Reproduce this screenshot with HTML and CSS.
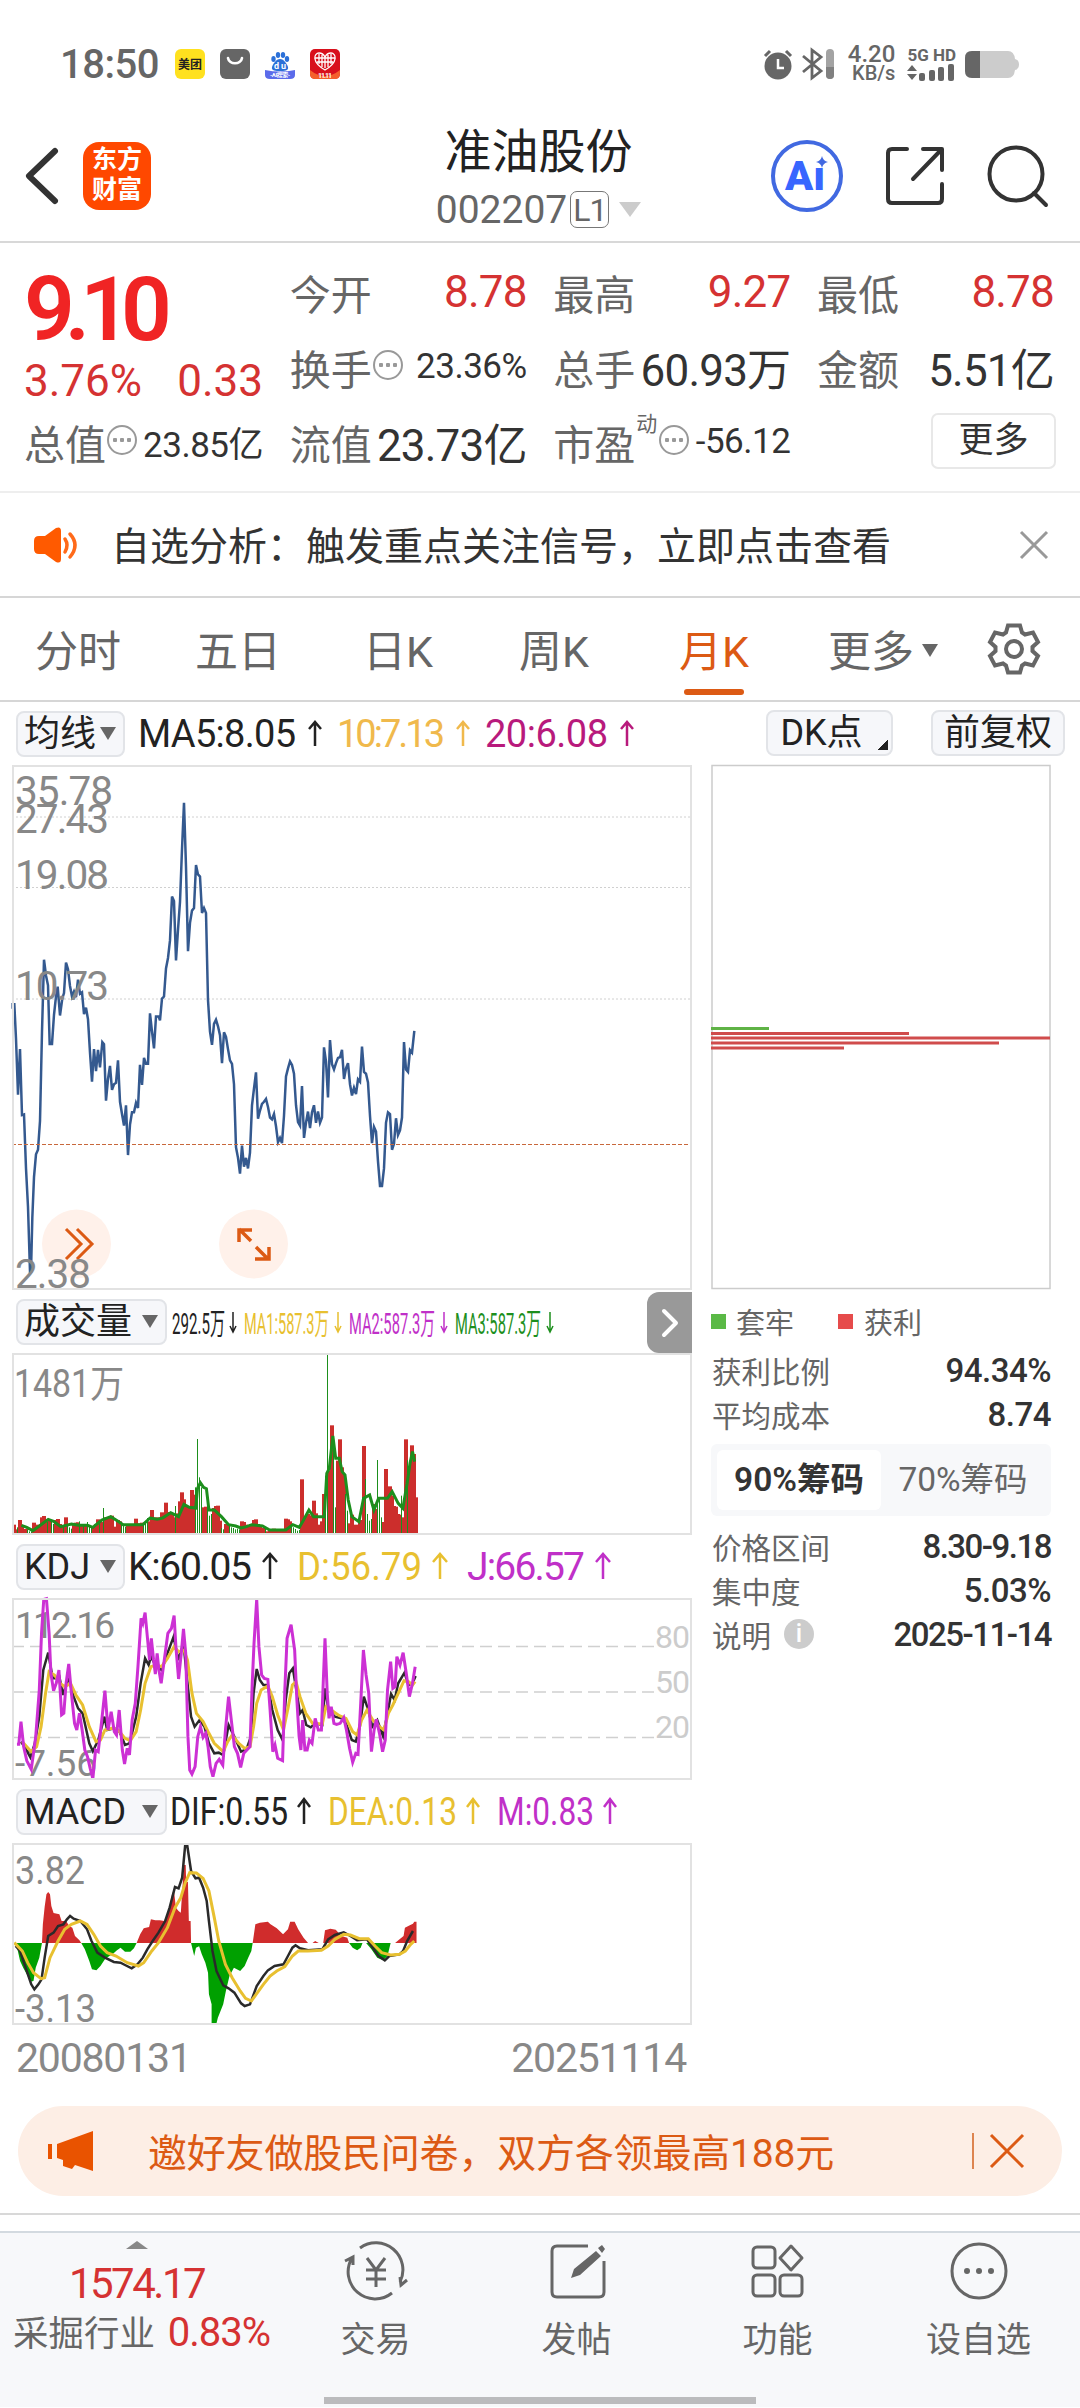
FILE: index.html
```html
<!DOCTYPE html>
<html lang="zh-CN">
<head>
    <title>准油股份 002207</title>
    <meta charset="UTF-8">
    <link rel="stylesheet" href="styles.css">
</head>
<body>
    <div class="status-bar">
        <span class="time">18:50</span>
        <svg class="app" viewBox="0 0 30 30"><rect width="30" height="30" rx="6" fill="#ffe11f"/><text x="3" y="19.5" font-size="12" font-weight="700" textLength="24" fill="#222">美团</text></svg>
        <svg class="app" viewBox="0 0 30 30"><rect width="30" height="30" rx="6" fill="#666"/><path d="M8 9c1 7 13 7 14 0" fill="none" stroke="#fff" stroke-width="2.6" stroke-linecap="round"/></svg>
        <svg class="app" viewBox="0 0 30 30"><g fill="#2b70d8"><ellipse cx="8.500" cy="10" rx="2.200" ry="2.900"/><ellipse cx="13" cy="6" rx="2.200" ry="3"/><ellipse cx="18" cy="6" rx="2.200" ry="3"/><ellipse cx="22" cy="10" rx="2.200" ry="2.900"/><path d="M15 10c4 0 7 5 8 8 1 4-4 4-8 4s-9 0-8-4c1-3 4-8 8-8z"/></g><text x="9" y="19.500" font-size="9" font-weight="700" textLength="12" fill="#fff">du</text><path d="M0 21q15 3 30 0v5q0 4-5 4H5q-5 0-5-4z" fill="#5b6bea"/><text x="5" y="28" font-size="6" font-weight="700" textLength="20" fill="#fff">-AI搜索-</text></svg>
        <svg class="app" viewBox="0 0 30 30"><rect width="30" height="30" rx="5" fill="#d8101c"/><path d="M0 21q15 12 30 0v4q0 5-5 5H5q-5 0-5-5z" fill="#f4602c"/><path d="M15 21C1 13 4 4 9 4c4 0 6 4 6 4s2-4 6-4c5 0 8 9-6 17zM9 5v10M21 5v10M5 9h20M7 13h16M12 6v12M18 6v12M15 9v10" fill="none" stroke="#fff" stroke-width="1.300"/><text x="8" y="29" font-size="7" font-weight="700" textLength="14" fill="#fff">11.11</text></svg>
        <div class="status-right">
            <svg width="30" height="32" viewBox="0 0 30 32"><circle cx="15" cy="18" r="13.500" fill="#666"/><path d="M2 8l5-5M28 8l-5-5" stroke="#666" stroke-width="3"/><path d="M15 11v9h6" fill="none" stroke="#fff" stroke-width="2.500"/></svg>
            <svg width="34" height="32" viewBox="0 0 34 32"><path d="M2 8l18 15-9 7V2l9 7L2 24" fill="none" stroke="#666" stroke-width="2.800"/><rect x="25" y="1" width="8" height="30" rx="4" fill="#a3a3a3"/><path d="M25 19h8v8a4 4 0 0 1-8 0z" fill="#808080"/></svg>
            <div class="speed"><b>4.20</b><span>KB/s</span></div>
            <div class="signal">
                <b>5G HD</b>
                <svg width="48" height="17" viewBox="0 0 48 17" fill="#666"><path d="M0 7l5-6 5 6zM0 10h10l-5 6z"/><rect x="12" y="9" width="6" height="8" rx="2"/><rect x="22" y="6" width="6" height="11" rx="2"/><rect x="31" y="3" width="6" height="14" rx="2"/><rect x="41" y="0" width="6" height="17" rx="2"/></svg>
            </div>
            <svg width="55" height="27" viewBox="0 0 55 27"><path d="M7 0h36q6 0 7 8 4 1 4 5.500t-4 5.500q-1 8-7 8H7q-7 0-7-7V7q0-7 7-7z" fill="#ccc"/><path d="M15 0H7Q0 0 0 7v13q0 7 7 7h8z" fill="#666"/></svg>
        </div>
    </div>

    <div class="header">
        <svg class="back" viewBox="0 0 34 56"><path d="M30 3L4 28l26 25" fill="none" stroke="#333" stroke-width="6" stroke-linecap="round" stroke-linejoin="round"/></svg>
        <div class="logo">东方<br>财富</div>
        <div class="title">
            <h1>准油股份</h1>
            <p>002207<span class="level">L1</span><i class="tri"></i></p>
        </div>
        <div class="actions">
            <svg width="72" height="74" viewBox="0 0 72 74"><circle cx="36" cy="37" r="34" fill="none" stroke="#4169e1" stroke-width="4"/><text x="14" y="51" font-size="41" font-weight="900" textLength="40" lengthAdjust="spacingAndGlyphs" fill="#3866ff">Aı</text><path d="M51 17q1 5 6 6-5 1-6 6-1-5-6-6 5-1 6-6z" fill="#4169e1"/></svg>
            <svg width="60" height="60" viewBox="0 0 60 60"><path d="M22 3H7Q3 3 3 7v46q0 4 4 4h46q4 0 4-4V38M38 3h19v21M56 4L28 33" fill="none" stroke="#333" stroke-width="4" stroke-linecap="round" stroke-linejoin="round"/></svg>
            <svg width="62" height="62" viewBox="0 0 62 62"><circle cx="29" cy="29" r="26.500" fill="none" stroke="#333" stroke-width="4"/><path d="M47 48l12 12" stroke="#333" stroke-width="4" stroke-linecap="round"/></svg>
        </div>
    </div>

    <div class="quote">
        <div class="col">
            <div class="price">9.10</div>
            <div class="cell change"><b class="red">3.76%</b><b class="red">0.33</b></div>
            <div class="cell">总值<i class="more-dot"></i><b class="small">23.85亿</b></div>
        </div>
        <div class="col">
            <div class="cell">今开<b class="red">8.78</b></div>
            <div class="cell">换手<i class="more-dot"></i><b class="small">23.36%</b></div>
            <div class="cell">流值<b>23.73亿</b></div>
        </div>
        <div class="col">
            <div class="cell">最高<b class="red">9.27</b></div>
            <div class="cell">总手<b>60.93万</b></div>
            <div class="cell">市盈<sup>动</sup><i class="more-dot"></i><b class="small">-56.12</b></div>
        </div>
        <div class="col">
            <div class="cell">最低<b class="red">8.78</b></div>
            <div class="cell">金额<b>5.51亿</b></div>
            <div class="cell"><button class="more">更多</button></div>
        </div>
    </div>

    <div class="notice">
        <svg width="44" height="36" viewBox="0 0 44 36"><path d="M0 14q0-5 5-5h6L22 1q5-2 5 3v28q0 5-5 3l-11-8H5q-5 0-5-5z" fill="#ff5a00"/><path d="M31 12q4 6 0 13M36 7q10 11 0 23" fill="none" stroke="#ff6a1a" stroke-width="3.500" stroke-linecap="round"/></svg>
        <span>自选分析：触发重点关注信号，立即点击查看</span>
        <svg width="30" height="30" viewBox="0 0 30 30"><path d="M2 2l26 26M28 2L2 28" stroke="#999" stroke-width="3"/></svg>
    </div>

    <div class="tabs">
        <span>分时</span><span>五日</span><span>日K</span><span>周K</span><span class="active">月K</span><span class="tab-more">更多<i class="tri"></i></span>
        <svg width="52" height="52" viewBox="-26 -26 52 52" fill="none" stroke="#666" stroke-width="4"><path d="M-6-23.500H6L8-16.500L11-14.500L19-16.500L24-7L18.500-2V2L24 7L19 16.500L11 14.500L8 16.500L6 23.500H-6L-8 16.500L-11 14.500L-19 16.500L-24 7L-18.500 2V-2L-24-7L-19-16.500L-11-14.500L-8-16.500Z"/><circle r="8"/></svg>
    </div>

    <div class="main">
        <div class="charts">
            <div class="indicator">
                <button class="pick narrow">均线<i class="tri"></i></button>
                <svg class="legend" width="500" height="62" viewBox="130 0 500 62" font-size="38">
                    <text x="138" y="45" textLength="158">MA5:8.05</text><path d="M315 44V20M309 27l6-7 6 7"/>
                    <g class="gold"><text x="337" y="45" textLength="108">10:7.13</text><path d="M463 44V20M457 27l6-7 6 7"/></g>
                    <g class="plum"><text x="485" y="45" textLength="123">20:6.08</text><path d="M627 44V20M621 27l6-7 6 7"/></g>
                </svg>
            </div>
            <div class="plot tall">
                <svg width="680" height="525" viewBox="12 764 680 525">
                    <path d="M12 816H692M12 886.500H692M12 998H692" stroke="#d0d0d0" stroke-dasharray="2 2"/>
                    <g transform="translate(0 750) scale(.33333 .35075)">
                        <polyline class="line price-line" points="38,735 38,722 43,722 48,820 54,980 60,850 66,1038 72,1036 78,1190 84,1300 90,1485 93,1485 97,1330 102,1215 108,1150 114,1137 120,1055 126,800 132,595 138,640 144,668 149,835 156,835 162,752 168,700 173,672 180,754 187,705 192,690 198,603 204,622 210,670 216,700 222,686 228,702 234,652 240,692 246,688 252,750 258,732 264,765 270,860 276,943 282,850 288,913 294,852 300,902 307,830 312,836 318,997 324,935 330,898 336,966 342,950 348,946 354,882 360,1000 366,1035 372,1068 378,1010 384,1152 390,1065 396,1030 402,1030 408,1003 414,1018 420,895 426,952 432,875 438,892 444,892 450,748 456,800 462,848 468,757 476,757 480,768 486,706 492,700 498,620 504,590 510,540 516,415 522,428 528,597 534,510 540,430 546,280 552,148 558,330 564,571 570,490 576,455 582,448 588,325 594,352 600,358 606,462 612,448 618,462 624,710 630,800 636,838 642,778 648,766 654,785 660,810 666,890 672,802 678,815 684,850 690,882 696,892 702,950 708,1130 714,1160 720,1205 726,1125 732,1185 738,1160 744,1190 750,1145 756,1010 762,962 768,916 774,1048 780,1025 786,1006 792,1000 798,992 804,1015 810,1045 816,1050 822,1035 828,1070 834,1115 840,1103 846,1118 852,1040 858,928 864,905 870,885 876,895 882,920 888,1010 894,1058 900,1068 906,955 912,1103 918,1060 924,1028 930,1075 936,1030 942,1010 948,1060 954,1028 960,1060 966,1045 972,845 978,885 984,988 990,824 996,893 1002,908 1008,890 1014,875 1020,873 1026,852 1032,935 1038,905 1044,890 1050,950 1056,982 1062,960 1068,978 1074,936 1080,943 1086,843 1092,915 1098,920 1104,945 1110,1040 1116,1118 1122,1072 1128,1085 1134,1170 1140,1240 1146,1240 1152,1190 1158,1060 1164,1030 1170,1035 1176,1137 1182,1120 1188,1047 1194,1095 1200,1082 1206,1045 1212,830 1218,908 1224,915 1230,853 1236,860 1243,798"/>
                    </g>
                    <path d="M12 1143.500H692" stroke="#c8683c" stroke-dasharray="4 2"/>
                    <g fill="#fff1ea"><circle cx="76.500" cy="1243" r="34.500"/><circle cx="253.500" cy="1243" r="34.500"/></g>
                    <g fill="none" stroke="#dc5a14" stroke-width="3"><path d="M66 1228l15 15-15 15M77 1228l15 15-15 15"/><path stroke-width="3.500" d="M251 1240l-12-12M239 1241V1229H252M256 1246l12 12M269 1246v12H255"/></g>
                    <g class="axis" font-size="40.500">
                        <text x="15" y="804" textLength="98">35.78</text><text x="15" y="832" textLength="94">27.43</text><text x="15" y="888" textLength="94">19.08</text><text x="15" y="999" textLength="94">10.73</text><text x="15" y="1287" textLength="76">2.38</text>
                    </g>
                </svg>
            </div>

            <div class="indicator">
                <button class="pick">成交量<i class="tri"></i></button>
                <svg class="legend thin" width="400" height="64" viewBox="170 1289 400 64" font-size="30">
                    <text x="172" y="1333" textLength="53" lengthAdjust="spacingAndGlyphs">292.5万</text><path d="M233 1311v20M230 1325l3 6 3-6"/>
                    <g class="yellow"><text x="244" y="1333" textLength="85" lengthAdjust="spacingAndGlyphs">MA1:587.3万</text><path d="M338 1311v20M335 1325l3 6 3-6"/></g>
                    <g class="purple"><text x="349" y="1333" textLength="86" lengthAdjust="spacingAndGlyphs">MA2:587.3万</text><path d="M444 1311v20M441 1325l3 6 3-6"/></g>
                    <g class="green"><text x="455" y="1333" textLength="86" lengthAdjust="spacingAndGlyphs">MA3:587.3万</text><path d="M550 1311v20M547 1325l3 6 3-6"/></g>
                </svg>
                <div class="handle"><svg width="18" height="30" viewBox="0 0 18 30"><path d="M3 3l12 12L3 27" fill="none" stroke="#fff" stroke-width="4" stroke-linecap="round" stroke-linejoin="round"/></svg></div>
            </div>
            <div class="plot">
                <svg width="680" height="182" viewBox="12 1353 680 182">
                    <text class="axis" x="14" y="1397" font-size="38" textLength="110" lengthAdjust="spacingAndGlyphs">1481万</text>
                    <g id="volume"></g>
                    <g transform="translate(0 1290) scale(.35714 .33333)">
                        <polyline class="line vol-line" points="60,706 75,712 92,722 115,704 135,688 150,694 170,710 200,702 220,706 245,706 260,712 285,690 310,680 325,690 345,704 370,704 400,704 420,684 440,688 455,684 478,668 500,680 515,643 530,652 548,654 553,595 561,578 570,592 578,596 585,660 600,660 620,680 640,704 660,708 675,714 690,710 705,704 735,708 755,720 800,720 820,704 838,712 850,690 865,660 878,680 895,680 908,680 915,550 922,535 932,438 940,505 950,505 958,545 966,555 975,630 985,680 1005,695 1018,625 1035,615 1047,660 1060,625 1085,625 1098,605 1115,640 1128,655 1140,580 1148,520 1155,485 1161,515"/>
                    </g>
                </svg>
            </div>

            <div class="indicator">
                <button class="pick narrow">KDJ<i class="tri"></i></button>
                <svg class="legend" width="500" height="63" viewBox="125 1535 500 63" font-size="39">
                    <text x="128" y="1580" textLength="124">K:60.05</text><path d="M270 1579v-25M263 1562l7-8 7 8"/>
                    <g class="yellow"><text x="297" y="1580" textLength="125" lengthAdjust="spacingAndGlyphs">D:56.79</text><path d="M440 1579v-25M433 1562l7-8 7 8"/></g>
                    <g class="purple"><text x="467" y="1580" textLength="118">J:66.57</text><path d="M603 1579v-25M596 1562l7-8 7 8"/></g>
                </svg>
            </div>
            <div class="plot">
                <svg width="680" height="182" viewBox="12 1598 680 182">
                    <path d="M12 1646.500H655M12 1692H655M12 1737.500H655" stroke="#d0d0d0" stroke-width="1.500" stroke-dasharray="12 6"/>
                    <g fill="#ccc" font-size="32"><text x="655" y="1648" textLength="35">80</text><text x="655" y="1693" textLength="35">50</text><text x="655" y="1738" textLength="35">20</text></g>
                    <g class="axis" font-size="37"><text x="15" y="1638" textLength="100">112.16</text><text x="15" y="1776" textLength="82">-7.56</text></g>
                    <g transform="translate(0 1550) scale(.44643 .33333)">
                        <polyline class="line dif" points="47,575 55,590 68,622 78,580 88,500 97,360 108,308 118,385 128,385 133,380 141,435 153,382 165,440 175,475 185,490 200,580 208,604 220,570 234,500 240,540 256,535 268,545 280,585 290,580 305,500 315,400 325,325 333,345 338,320 350,350 362,360 375,310 389,260 399,330 411,280 420,400 428,500 436,530 447,510 458,530 468,580 480,610 490,608 500,615 512,525 525,560 540,605 552,598 562,560 568,430 575,357 582,390 590,405 600,405 610,480 622,540 633,570 640,450 648,370 656,355 665,430 672,490 678,480 686,525 696,532 706,520 722,525 728,415 736,480 750,500 765,505 775,520 788,570 797,575 806,530 815,440 825,480 834,530 845,510 858,558 868,490 876,432 884,450 892,400 906,368 915,405 924,400 931,378"/>
                        <polyline class="line dea" points="50,575 70,605 82,590 92,530 102,430 110,365 122,375 135,400 145,410 158,400 170,435 185,465 200,530 215,575 225,570 235,540 250,535 265,540 280,565 292,572 305,545 315,480 325,400 338,350 350,345 362,350 375,325 390,290 400,305 412,300 420,330 430,430 440,490 455,515 468,550 480,580 500,605 510,575 520,555 535,580 548,595 560,590 568,530 575,460 585,420 600,408 610,440 622,495 635,540 645,475 655,405 663,395 672,440 685,490 700,520 722,522 730,470 742,480 760,497 775,505 790,545 800,555 810,510 822,480 835,510 850,530 860,540 870,490 880,465 892,430 905,392 915,395 924,405 930,395"/>
                        <polyline class="line j-line" points="38,583 42,583 47,515 53,590 60,632 70,658 76,600 80,560 88,420 93,250 98,148 104,146 110,250 114,370 120,422 126,400 132,360 138,495 143,490 148,400 154,342 160,430 167,520 172,540 178,490 184,540 190,600 196,620 202,655 208,686 214,600 220,605 228,510 235,422 242,540 249,485 256,545 261,555 267,480 274,600 279,642 285,595 290,615 296,510 303,460 309,350 316,205 320,220 325,188 330,260 335,330 339,265 344,330 348,372 352,310 356,360 361,400 368,330 376,250 384,235 390,197 394,290 400,387 406,310 411,237 416,310 421,560 425,660 430,672 437,650 443,560 449,530 455,562 461,550 466,590 471,650 477,680 484,640 491,628 499,645 505,540 512,440 519,520 525,590 532,610 539,652 546,610 553,600 560,590 565,400 569,280 575,148 580,290 586,375 592,385 600,388 605,480 611,605 616,585 622,625 633,632 638,420 643,265 652,224 660,300 665,450 670,560 674,600 678,510 683,600 688,600 693,570 699,580 706,505 713,540 720,540 724,400 728,265 733,430 737,505 742,470 748,520 754,523 762,520 770,503 776,540 783,595 790,637 797,610 802,613 808,460 814,300 820,375 826,430 832,605 838,540 843,508 850,550 857,605 863,570 868,420 875,335 880,415 885,410 889,320 896,345 903,308 910,370 917,440 924,400 930,350"/>
                    </g>
                </svg>
            </div>

            <div class="indicator">
                <button class="pick">MACD<i class="tri"></i></button>
                <svg class="legend" width="460" height="62" viewBox="170 1780 460 62" font-size="39">
                    <text x="170" y="1825" textLength="118" lengthAdjust="spacingAndGlyphs">DIF:0.55</text><path d="M304 1824v-25M298 1807l6-8 6 8"/>
                    <g class="yellow"><text x="328" y="1825" textLength="129" lengthAdjust="spacingAndGlyphs">DEA:0.13</text><path d="M473 1824v-25M467 1807l6-8 6 8"/></g>
                    <g class="purple"><text x="497" y="1825" textLength="97" lengthAdjust="spacingAndGlyphs">M:0.83</text><path d="M610 1824v-25M604 1807l6-8 6 8"/></g>
                </svg>
            </div>
            <div class="plot">
                <svg width="680" height="182" viewBox="12 1842 680 182">
                    <g class="axis" font-size="39"><text x="15" y="1883" textLength="70" lengthAdjust="spacingAndGlyphs">3.82</text><text x="15" y="2021" textLength="81" lengthAdjust="spacingAndGlyphs">-3.13</text></g>
                    <g transform="translate(0 1790) scale(.44643 .33333)">
                        <path fill="#00a000" d="M35 456L40 480L45 510L52 530L60 550L68 572L75 570L80 530L88 500L94 456ZM182 456L190 475L200 510L206 535L216 538L225 525L235 505L245 495L252 490L262 478L270 470L280 482L292 482L300 472L306 456ZM428 456L435 495L439 470L446 466L452 490L460 515L466 545L468 610L474 640V702H484L488 680L500 640L506 600L514 555L524 530L538 540L548 525L556 500L563 480L566 456ZM782 456L790 470L800 478L808 470L812 456ZM820 456L832 475L845 500L858 508L868 495L875 456Z"/>
                        <path fill="#d02c2c" d="M94 456L96 400L100 348L104 310L108 303L112 310L115 345L120 366L133 370L138 390H148L155 405L162 410L168 435L178 448L182 456ZM306 456L314 430L322 412L334 408L338 385L348 388H358L368 390L374 370L380 345L386 305L390 303L394 350L400 360L405 365L408 305L412 222H416L417 273H421L423 390H427L428 456ZM566 456L572 400L582 395L600 392L606 400L620 412L634 430L645 415L650 392H660L668 415L680 440L690 456ZM700 456L706 450L714 456ZM724 456L728 418L740 413L752 416L765 435L778 440L782 456ZM885 456L895 445L904 435L907 410L918 403L925 398L928 392H933V456Z"/>
                        <polyline class="line dif" points="35,465 45,480 60,540 70,580 77,595 86,580 93,565 100,500 108,435 120,425 130,405 142,400 150,385 157,375 165,383 180,390 195,415 205,450 218,485 235,500 255,513 270,515 280,522 295,532 308,520 320,500 330,475 342,450 355,425 370,390 380,350 392,288 400,292 408,260 415,160 419,160 428,240 438,262 446,260 455,290 463,330 468,390 476,480 485,540 500,583 512,592 525,605 540,637 548,645 560,640 575,585 590,555 600,538 615,525 635,520 645,495 655,470 662,463 672,472 690,478 722,475 735,445 750,432 770,424 785,435 800,448 822,445 835,470 848,495 862,508 872,495 895,490 903,480 912,450 925,420"/>
                        <polyline class="line dea" points="32,455 50,480 62,515 75,545 92,563 100,560 112,500 130,450 145,415 160,400 180,390 195,400 210,430 225,465 240,485 260,495 285,515 310,525 322,515 340,480 355,455 375,410 392,350 405,320 415,275 425,245 440,246 455,262 468,300 480,380 490,450 505,520 520,560 538,600 550,622 563,630 575,608 590,580 605,555 620,540 638,527 655,495 668,480 690,480 720,478 735,465 750,445 770,430 785,432 805,443 825,443 840,465 855,485 875,492 895,490 908,480 920,460 928,450"/>
                    </g>
                </svg>
            </div>
            <div class="dates"><span>20080131</span><span>20251114</span></div>
        </div>

        <div class="side">
            <div class="side-buttons">
                <button class="pick dk">DK点</button>
                <button class="pick fq">前复权</button>
            </div>
            <svg class="chips" width="340" height="525" viewBox="711 764 340 525"><rect x="712" y="765.500" width="338" height="523" fill="none" stroke="#ccc" stroke-width="1.500"/><path d="M711 1028.500h58" stroke="#5fb346" stroke-width="3"/><path d="M711 1033.500h198M711 1038h339M711 1043h288M711 1048h133" stroke="#d04c4c" stroke-width="3"/></svg>
            <div class="chip-legend"><i class="sq lose"></i>套牢<i class="sq win"></i>获利</div>
            <div class="info-row">获利比例<b>94.34%</b></div>
            <div class="info-row">平均成本<b>8.74</b></div>
            <div class="segment"><span class="on">90%筹码</span><span>70%筹码</span></div>
            <div class="info-row">价格区间<b class="tight">8.30-9.18</b></div>
            <div class="info-row">集中度<b>5.03%</b></div>
            <div class="info-row">说明<i class="info">i</i><b class="tight">2025-11-14</b></div>
        </div>
    </div>

    <div class="banner">
        <svg width="46" height="40" viewBox="0 0 46 40"><path d="M0 13h4v15H0zM9 13L45 0v40L27 34l-3 4-9-3v-6l-6-2z" fill="#e95300"/></svg>
        <span>邀好友做股民问卷，双方各领最高188元</span>
        <svg class="banner-close" width="54" height="38" viewBox="0 0 54 38"><path d="M2 1v36" stroke="#d2601e" stroke-width="1.500"/><path d="M20 3l32 32M52 3L20 35" stroke="#dc5a14" stroke-width="3"/></svg>
    </div>

    <div class="bottom-bar">
        <div class="index">
            <i class="tri up"></i>
            <div class="index-value">1574.17</div>
            <div class="index-name">采掘行业 <b>0.83%</b></div>
        </div>
        <div class="nav">
            <svg width="66" height="60" viewBox="0 0 66 60"><path d="M17 7A27 27 0 0 1 57 41M49 52A27 27 0 0 1 9 17M2 20l8-4v8M64 39l-6 5-1-8" /><path d="M24 17l9 12 9-12M33 29v17M23 29h20M23 38h20"/></svg>
            交易
        </div>
        <div class="nav">
            <svg width="60" height="60" viewBox="0 0 60 60"><path d="M41 5H10q-5 0-5 5v41q0 5 5 5h42q5 0 5-5V20"/><path d="M24 37l3-9L49 10l5 5-21 19zM51 7l4-3 3 4-3 4z" fill="#666" stroke="none"/></svg>
            发帖
        </div>
        <div class="nav">
            <svg width="60" height="60" viewBox="0 0 60 60"><rect x="5" y="6" width="22" height="21" rx="4"/><rect x="5" y="34" width="22" height="21" rx="4"/><rect x="32" y="34" width="22" height="21" rx="4"/><path d="M43 5l11 12-11 12-11-12z" stroke-linejoin="round"/></svg>
            功能
        </div>
        <div class="nav">
            <svg width="60" height="60" viewBox="0 0 60 60"><circle cx="30" cy="30" r="27"/><g fill="#666" stroke="none"><circle cx="18" cy="30" r="3"/><circle cx="30" cy="30" r="3"/><circle cx="42" cy="30" r="3"/></g></svg>
            设自选
        </div>
    </div>
    <div class="home-line"></div>

    <script>
        // 成交量柱：正数为红，负数为绿
        const volumes = [
            28,14,-20,42,26,14,15,-12,-8,-8, 34,28,20,28,50,54,40,-36,42,-38,
            -30,42,45,30,24,-26,50,-28,-20,-16, 32,34,35,-38,30,-26,28,-36,-22,-18,
            24,30,44,-40,36,-78,50,48,52,55, 20,22,42,38,-28,-24,-22,24,28,26,
            30,46,32,28,34,-30,-34,-48,38,72, 46,50,42,50,65,54,94,66,60,58,
            50,-84,62,98,125,104,84,14,80,132, 118,-140,-285,-170,-140,80,82,-90,-55,-60,
            78,84,85,40,-18,-14,30,28,-26,-20, -18,-14,-16,-14,38,36,28,26,24,30,
            42,44,30,24,14,18,-16,8,10,12, 16,12,8,10,10,8,46,44,38,-28,
            -20,-15,-10,-12,164,40,50,60,44,56, 100,62,26,28,38,120,-175,-541,190,326,
            -290,-80,220,284,200,170,-120,-70,32,58, 26,28,24,42,40,264,-165,-60,-40,-45,
            90,75,-222,-110,-50,36,195,140,143,115, 84,82,60,58,-115,50,284,-222,200,266,
            240,110
        ];
        let bars = '';
        volumes.forEach((v, i) => {
            const h = Math.abs(v) / 3;
            const x = 13 + i * 2;
            const w = v > 0 ? 4 : 1;
            bars += `<rect x="${v > 0 ? x - 1 : x}" y="${1534 - h}" width="${w}" height="${h}" fill="${v > 0 ? '#cc2e2c' : '#1d8f1d'}"/>`;
        });
        document.getElementById('volume').innerHTML = bars;
    </script>
</body>
</html>
```
FILE: styles.css
```css
* {
    box-sizing: border-box;
}
body {
    margin: 0;
    width: 1080px;
    height: 2408px;
    overflow: hidden;
    background: #fff;
    color: #333;
    font-family: Roboto, "Noto Sans CJK SC", sans-serif;
    display: flex;
    flex-direction: column;
}
svg {
    display: block;
    flex: none;
    overflow: visible;
}
b, h1 {
    font-weight: 400;
}
i {
    font-style: normal;
}
button {
    font-family: inherit;
    padding: 0;
}
.red {
    color: #d53232;
}
.tri {
    display: inline-block;
    border: 8px solid transparent;
    border-top: 13px solid #666;
    border-bottom: 0;
}

/* 状态栏 */
.status-bar {
    height: 110px;
    padding: 18px 60px 0 60px;
    display: flex;
    align-items: center;
    color: #666;
}
.time {
    width: 115px;
    font-size: 40px;
    font-weight: 500;
    letter-spacing: -0.5px;
}
.app {
    width: 30px;
    height: 30px;
    margin-right: 15px;
}
.status-right {
    margin-left: auto;
    display: flex;
    align-items: center;
}
.status-right > svg:nth-child(2) {
    margin-left: 8px;
}
.speed {
    width: 48px;
    margin-left: 12px;
    font-size: 20px;
    line-height: 19px;
    text-align: right;
    font-weight: 500;
}
.speed b {
    display: block;
    font-size: 24px;
    font-weight: 500;
}
.signal {
    margin: 0 9px 0 12px;
}
.signal b {
    display: block;
    font-size: 17px;
    line-height: 17px;
    font-weight: 700;
}

/* 标题栏 */
.header {
    height: 133px;
    padding: 0 31px 0 25px;
    border-bottom: 2px solid #d8d8d8;
    display: flex;
    align-items: center;
}
.back {
    width: 34px;
    height: 56px;
}
.logo {
    width: 68px;
    height: 68px;
    margin-left: 24px;
    border-radius: 16px;
    background: #ff4800;
    color: #fff;
    font-size: 25px;
    font-weight: 700;
    line-height: 30px;
    padding-top: 3px;
    text-align: center;
}
.title {
    flex: 1;
    padding: 8px 0 0 155px;
    text-align: center;
}
.title h1 {
    margin: 0;
    font-size: 47px;
    line-height: 60px;
    color: #222;
}
.title p {
    margin: 0;
    height: 56px;
    font-size: 39px;
    color: #666;
    display: flex;
    align-items: center;
    justify-content: center;
}
.level {
    width: 39px;
    height: 37px;
    margin: 0 10px 0 3px;
    border: 1.5px solid #777;
    border-radius: 7px;
    font-size: 32px;
    line-height: 36px;
    letter-spacing: -1px;
}
.title .tri {
    border-width: 15px 11px 0;
    border-top-color: #ccc;
}
.actions {
    display: flex;
    align-items: center;
    gap: 42px;
}

/* 行情 */
.quote {
    height: 250px;
    padding: 11px 26px 0 24px;
    border-bottom: 2px solid #eee;
    display: flex;
    justify-content: space-between;
}
.col {
    width: 237px;
}
.col:first-child {
    width: 239px;
}
.price {
    height: 89px;
    padding-top: 11px;
    line-height: 89px;
    font-size: 89px;
    font-weight: 600;
    letter-spacing: -10px;
    color: #f02424;
}
.cell {
    height: 75px;
    display: flex;
    align-items: center;
    font-size: 41px;
    color: #666;
}
.cell.change {
    height: 61px;
    padding-top: 14px;
    justify-content: space-between;
}
.cell b {
    margin-left: auto;
    font-size: 44px;
    letter-spacing: -0.8px;
    color: #333;
    white-space: nowrap;
}
.cell.change b {
    margin-left: 0;
    letter-spacing: 0;
}
.cell b.red {
    color: #d53232;
}
.cell b.small {
    font-size: 35px;
    letter-spacing: -0.5px;
}
.cell sup {
    font-size: 21px;
    align-self: flex-start;
    line-height: 20px;
    margin: 10px 1px 0 1px;
}
.more-dot {
    width: 30px;
    height: 30px;
    margin: 0 0 3px 1px;
    border: 2px solid #999;
    border-radius: 50%;
    background: radial-gradient(circle at 6px 13px, #999 2px, transparent 2.5px), radial-gradient(circle at 13px 13px, #999 2px, transparent 2.5px), radial-gradient(circle at 20px 13px, #999 2px, transparent 2.5px);
}
.more {
    width: 125px;
    height: 56px;
    margin: 0 -2px 1px auto;
    border: 2px solid #e8e8e8;
    border-radius: 7px;
    background: #fff;
    font-size: 35px;
    line-height: 50px;
    color: #333;
}

/* 提示 */
.notice {
    height: 105px;
    padding: 0 31px 0 34px;
    border-bottom: 2px solid #d6d6d6;
    display: flex;
    align-items: center;
    font-size: 39px;
}
.notice span {
    flex: 1;
    padding: 0 0 4px 33px;
    white-space: nowrap;
}

/* 周期 */
.tabs {
    height: 104px;
    border-bottom: 2px solid #d6d6d6;
    padding-left: 35px;
    display: grid;
    grid-template-columns: 160px 168px 156px 160px 149px 160px 52px;
    align-items: center;
    font-size: 43px;
    color: #666;
}
.tabs span {
    justify-self: start;
    line-height: 88px;
    padding-top: 5px;
    white-space: nowrap;
}
.tabs .active {
    position: relative;
    color: #dc5a14;
}
.active::after {
    content: "";
    position: absolute;
    left: 5px;
    width: 60px;
    bottom: 1px;
    height: 6px;
    border-radius: 3px;
    background: #dc5a14;
}
.tab-more .tri {
    margin: 0 0 10px 8px;
}

/* 图表 */
.main {
    display: flex;
    height: 1404px;
}
.charts {
    width: 692px;
    padding-left: 12px;
}
.indicator {
    position: relative;
    height: 63px;
    display: flex;
    align-items: center;
}
.pick {
    height: 46px;
    border: 2px solid #e2e4e8;
    border-radius: 8px;
    background: #f6f7fa;
    color: #222;
    font-size: 36px;
    line-height: 40px;
    white-space: nowrap;
}
.indicator .pick {
    width: 151px;
    margin-left: 4px;
    padding: 0 7px 0 6px;
    display: flex;
    align-items: center;
    justify-content: space-between;
}
.indicator .narrow {
    width: 109px;
}
.legend {
    position: absolute;
    left: 118px;
    top: 0;
    fill: #222;
    stroke: none;
}
.legend path {
    fill: none;
    stroke: #222;
    stroke-width: 2.5;
}
.legend.thin path {
    stroke-width: 1.5;
}
.indicator .pick:not(.narrow) + .legend {
    left: 158px;
}
.indicator .narrow + .legend[font-size="39"] {
    left: 113px;
}
.legend .gold { fill: #f0b94c; }
.legend .gold path { stroke: #f0b94c; }
.legend .plum { fill: #b81a7c; }
.legend .plum path { stroke: #b81a7c; }
.legend .yellow { fill: #e8c030; }
.legend .yellow path { stroke: #e8c030; }
.legend .purple { fill: #c030c8; }
.legend .purple path { stroke: #c030c8; }
.legend .green { fill: #1d8f1d; }
.legend .green path { stroke: #1d8f1d; }
.plot {
    height: 182px;
    outline: 2px solid #e2e2e2;
    outline-offset: -2px;
}
.plot.tall {
    height: 525px;
}
.axis {
    fill: #888;
}
.line {
    fill: none;
    stroke-width: 2.5;
    vector-effect: non-scaling-stroke;
}
.price-line { stroke: #34598f; }
.vol-line { stroke: #1d8f1d; stroke-width: 3; }
.dif { stroke: #2a2a2a; }
.dea { stroke: #e8c030; stroke-width: 3; }
.j-line { stroke: #cc30d4; stroke-width: 3; }
.handle {
    position: absolute;
    right: 0;
    top: 2px;
    width: 45px;
    height: 61px;
    border-radius: 12px 0 0 12px;
    background: #999;
    display: flex;
    align-items: center;
    justify-content: center;
}
.dates {
    display: flex;
    justify-content: space-between;
    padding: 9px 6px 0 4px;
    font-size: 41px;
    line-height: 48px;
    letter-spacing: -1.2px;
    color: #888;
}

/* 筹码 */
.side {
    width: 340px;
    margin-left: 19px;
}
.side-buttons {
    height: 62px;
    display: flex;
    align-items: center;
    padding-left: 55px;
}
.side-buttons .pick {
    flex: none;
}
.dk {
    width: 127px;
    margin-right: 38px;
    padding-right: 16px;
    background: linear-gradient(135deg, transparent 50%, #222 50%) 109px 27px / 11px 11px no-repeat #f6f7fa;
}
.fq {
    width: 134px;
}
.chip-legend {
    height: 64px;
    display: flex;
    align-items: center;
    font-size: 29px;
    color: #666;
}
.sq {
    width: 15px;
    height: 15px;
    margin-right: 10px;
}
.lose {
    background: #5ab946;
}
.win {
    background: #e64b4b;
    margin-left: 44px;
    margin-right: 11px;
}
.info-row {
    height: 44px;
    padding-left: 1px;
    display: flex;
    align-items: center;
    font-size: 29.5px;
    color: #666;
}
.info-row:nth-child(4) {
    margin-top: -5px;
}
.info-row b {
    margin-left: auto;
    font-size: 33px;
    font-weight: 500;
    letter-spacing: -0.5px;
    color: #333;
}
.info-row .tight {
    letter-spacing: -1.5px;
}
.info {
    width: 30px;
    height: 30px;
    margin-left: 13px;
    border-radius: 50%;
    background: #ccc;
    color: #fff;
    font-size: 25px;
    line-height: 30px;
    text-align: center;
    font-weight: 500;
}
.segment {
    height: 72px;
    margin: 8px 0;
    padding: 6px;
    border-radius: 6px;
    background: #f7f8fa;
    display: flex;
    font-size: 33.5px;
    line-height: 60px;
    color: #666;
    text-align: center;
}
.segment span {
    width: 164px;
}
.segment .on {
    border-radius: 6px;
    background: #fff;
    color: #333;
    font-weight: 600;
}

/* 横幅 */
.banner {
    height: 90px;
    margin: 0 18px 17px;
    padding: 0 37px 0 30px;
    border-radius: 45px;
    background: #fdeee5;
    color: #dc5a14;
    font-size: 39px;
    display: flex;
    align-items: center;
}
.banner span {
    padding: 0 0 3px 54px;
    letter-spacing: -0.2px;
    white-space: nowrap;
}
.banner-close {
    margin-left: auto;
}

/* 底部 */
.bottom-bar {
    position: relative;
    height: 164px;
    margin-top: 18px;
    border-top: 2px solid #d3dae0;
    background: #f7f8fa;
    display: flex;
}
.bottom-bar::before {
    content: "";
    position: absolute;
    left: 0;
    top: -20px;
    width: 100%;
    height: 2px;
    background: #d8d8d8;
}
.index {
    width: 275px;
    padding-right: 2px;
    display: flex;
    flex-direction: column;
    align-items: center;
}
.up {
    margin-top: 8px;
    border: 11px solid transparent;
    border-top: 0;
    border-bottom: 8px solid #888;
}
.index-value {
    margin-top: 11px;
    font-size: 42px;
    line-height: 48px;
    letter-spacing: -2.5px;
    color: #d53232;
}
.index-name {
    padding-left: 10px;
    font-size: 35.5px;
    line-height: 50px;
    color: #666;
    white-space: nowrap;
}
.index-name b {
    margin-left: 4px;
    font-size: 40px;
    letter-spacing: -1px;
    color: #d53232;
}
.nav {
    width: 201px;
    padding-top: 8px;
    display: flex;
    flex-direction: column;
    align-items: center;
    gap: 14px;
    font-size: 35px;
    line-height: 52px;
    color: #666;
}
.nav svg {
    fill: none;
    stroke: #666;
    stroke-width: 3;
}
.home-line {
    height: 12px;
    background: linear-gradient(#bbbbbd, #bbbbbd) 324px 2px / 432px 7px no-repeat #f7f8fa;
}
```
